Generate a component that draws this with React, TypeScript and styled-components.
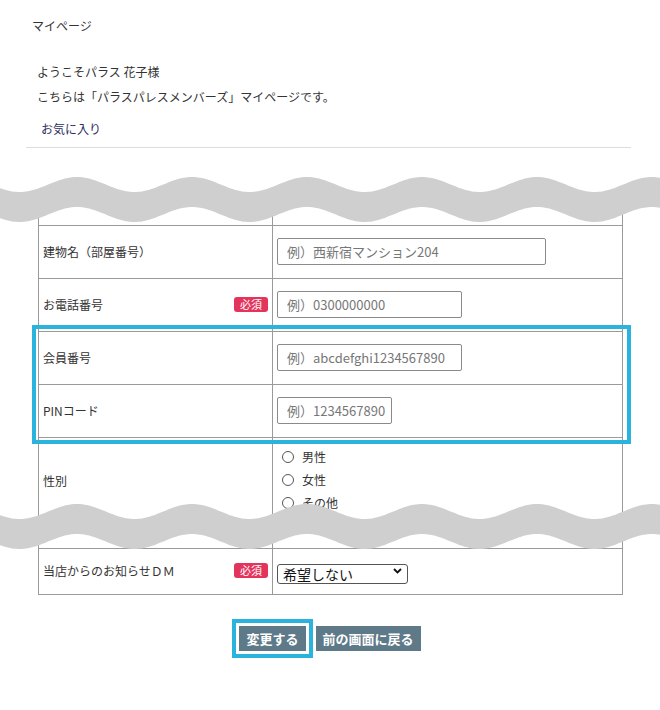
import React from "react";
import styled, { createGlobalStyle } from "styled-components";

const GlobalStyle = createGlobalStyle`
  html, body {
    margin: 0;
    padding: 0;
    background: #ffffff;
  }
  body {
    font-family: "Noto Sans CJK JP", "Noto Sans", sans-serif;
    color: #333333;
  }
`;

const LINE = "#9a9a9a";

const Page = styled.div`
  width: 660px;
  padding-bottom: 58px;
`;

const Title = styled.div`
  padding: 17px 0 0 32px;
  font-size: 12px;
  line-height: 18px;
`;

const Greeting = styled.div`
  margin-top: 24px;
  padding-left: 37px;
  font-size: 12px;
  line-height: 25px;
`;

const FavWrap = styled.div`
  margin-top: 9px;
  padding-left: 41px;
  line-height: 18px;
`;

const FavLink = styled.a`
  font-size: 12px;
  color: #2d2d5e;
  text-decoration: none;
`;

const Divider = styled.hr`
  margin: 9px 0 0 26px;
  width: 605px;
  height: 0;
  border: 0;
  border-top: 1px solid #dddddd;
`;

const Sheet = styled.div`
  position: relative;
  margin-top: 51px;
`;

const Table = styled.div`
  width: 585px;
  margin-left: 38px;
`;

const Row = styled.div<{ $h: number; $top?: boolean; $bottom?: boolean }>`
  display: grid;
  grid-template-columns: 234px 351px;
  height: ${(p) => p.$h}px;
  box-sizing: border-box;
  border-top: ${(p) => (p.$top ? `1px solid ${LINE}` : "none")};
  border-bottom: ${(p) => (p.$bottom ? `1px solid ${LINE}` : "none")};
`;

const LabelCell = styled.div`
  display: flex;
  align-items: center;
  justify-content: space-between;
  padding: 0 4px 2px 4px;
  border-left: 1px solid ${LINE};
  font-size: 12px;
  color: #333333;
`;

const ValueCell = styled.div<{ $list?: boolean }>`
  display: flex;
  flex-direction: column;
  justify-content: ${(p) => (p.$list ? "flex-start" : "center")};
  align-items: flex-start;
  padding: ${(p) => (p.$list ? "7px 0 0 9px" : "0 0 1px 4px")};
  border-left: 1px solid ${LINE};
  border-right: 1px solid ${LINE};
`;

const Badge = styled.span`
  display: inline-flex;
  align-items: center;
  justify-content: center;
  width: 34px;
  height: 15px;
  border-radius: 3px;
  background: #e4345c;
  color: #ffffff;
  font-size: 11px;
  line-height: 15px;
`;

const TextInput = styled.input<{ $w: number }>`
  box-sizing: border-box;
  width: ${(p) => p.$w}px;
  height: 27px;
  margin: 0;
  padding: 0 0 0 9px;
  border: 1px solid #8a8a8a;
  border-radius: 2px;
  font-family: "Noto Sans CJK JP", "Noto Sans", sans-serif;
  font-size: 13px;
  color: #333;
  outline: none;
  &::placeholder {
    color: #777777;
  }
`;

const Highlight = styled.div`
  position: relative;
  &::after {
    content: "";
    position: absolute;
    top: -6px;
    left: -6px;
    right: -8px;
    bottom: -7px;
    border: 4px solid #2ab4dd;
    pointer-events: none;
  }
`;

const RadioItem = styled.label`
  display: flex;
  align-items: center;
  height: 23px;
  font-size: 12px;
  color: #333333;
`;

const RadioDot = styled.input`
  appearance: none;
  box-sizing: border-box;
  width: 12px;
  height: 12px;
  margin: 0 8px 0 0;
  border: 1px solid #555555;
  border-radius: 50%;
  background: #fff;
`;

const SelectWrap = styled.div`
  position: relative;
  width: 131px;
  height: 20px;
`;

const Select = styled.select`
  appearance: none;
  box-sizing: border-box;
  width: 131px;
  height: 20px;
  margin: 0;
  padding: 0 0 0 5px;
  border: 1px solid #555555;
  border-radius: 3px;
  background: #ffffff;
  font-family: "Noto Sans CJK JP", "Noto Sans", sans-serif;
  font-size: 14px;
  line-height: 18px;
  color: #111111;
`;

const Chevron = styled.svg`
  position: absolute;
  right: 6px;
  top: 7px;
  pointer-events: none;
`;

const WaveSvg = styled.svg<{ $top: number }>`
  position: absolute;
  left: 0;
  top: ${(p) => p.$top}px;
  display: block;
  pointer-events: none;
`;

const Buttons = styled.div`
  display: flex;
  justify-content: center;
  gap: 10px;
  margin-top: 31px;
`;

const Button = styled.button<{ $marked?: boolean }>`
  height: 25px;
  padding: 0 7px;
  border: 0;
  border-radius: 0;
  background: #5e7a89;
  color: #ffffff;
  font-family: "Noto Sans CJK JP", "Noto Sans", sans-serif;
  font-size: 13px;
  font-weight: bold;
  outline: ${(p) => (p.$marked ? "4px solid #2ab4dd" : "none")};
  outline-offset: 3px;
  cursor: pointer;
`;

function wavePath(width = 660, period = 115, phase = 77, amp = 15, thick = 30) {
  const top: string[] = [];
  const bottom: string[] = [];
  for (let x = 0; x <= width; x += 2) {
    const y = (amp / 2) * (1 - Math.cos((2 * Math.PI * (x - phase)) / period));
    top.push(`${x},${y.toFixed(2)}`);
    bottom.unshift(`${x},${(y + thick).toFixed(2)}`);
  }
  return `M${top.join(" L")} L${bottom.join(" L")} Z`;
}

const Wave: React.FC<{ top: number }> = ({ top }) => (
  <WaveSvg $top={top} width="660" height="46" viewBox="0 0 660 46">
    <path d={wavePath()} fill="#cfcfcf" />
  </WaveSvg>
);

const FieldRow: React.FC<{
  label: string;
  required?: boolean;
  placeholder: string;
  width: number;
}> = ({ label, required, placeholder, width }) => (
  <Row $h={53} $top>
    <LabelCell>
      <span>{label}</span>
      {required && <Badge>必須</Badge>}
    </LabelCell>
    <ValueCell>
      <TextInput $w={width} placeholder={placeholder} />
    </ValueCell>
  </Row>
);

export default function App() {
  return (
    <Page>
      <GlobalStyle />
      <Title>マイページ</Title>
      <Greeting>
        <div>ようこそパラス 花子様</div>
        <div>こちらは「パラスパレスメンバーズ」マイページです。</div>
      </Greeting>
      <FavWrap>
        <FavLink href="#">お気に入り</FavLink>
      </FavWrap>
      <Divider />

      <Sheet>
        <Table>
          <Row $h={26}>
            <LabelCell />
            <ValueCell />
          </Row>
          <FieldRow label="建物名（部屋番号）" placeholder="例）西新宿マンション204" width={269} />
          <FieldRow label="お電話番号" required placeholder="例）0300000000" width={185} />
          <Highlight>
            <FieldRow label="会員番号" placeholder="例）abcdefghi1234567890" width={185} />
            <FieldRow label="PINコード" placeholder="例）1234567890" width={115} />
          </Highlight>
          <Row $h={88} $top>
            <LabelCell>
              <span>性別</span>
            </LabelCell>
            <ValueCell $list>
              <RadioItem>
                <RadioDot type="radio" name="sex" />
                男性
              </RadioItem>
              <RadioItem>
                <RadioDot type="radio" name="sex" />
                女性
              </RadioItem>
              <RadioItem>
                <RadioDot type="radio" name="sex" />
                その他
              </RadioItem>
            </ValueCell>
          </Row>
          <Row $h={23}>
            <LabelCell />
            <ValueCell />
          </Row>
          <Row $h={47} $top $bottom>
            <LabelCell>
              <span>当店からのお知らせＤＭ</span>
              <Badge>必須</Badge>
            </LabelCell>
            <ValueCell>
              <SelectWrap>
                <Select defaultValue="no">
                  <option value="no">希望しない</option>
                  <option value="yes">希望する</option>
                </Select>
                <Chevron width="9" height="6" viewBox="0 0 9 6">
                  <path d="M1 1 L4.5 4.5 L8 1" fill="none" stroke="#111" strokeWidth="1.8" />
                </Chevron>
              </SelectWrap>
            </ValueCell>
          </Row>
        </Table>
        <Wave top={-22} />
        <Wave top={305} />
      </Sheet>

      <Buttons>
        <Button $marked>変更する</Button>
        <Button>前の画面に戻る</Button>
      </Buttons>
    </Page>
  );
}
